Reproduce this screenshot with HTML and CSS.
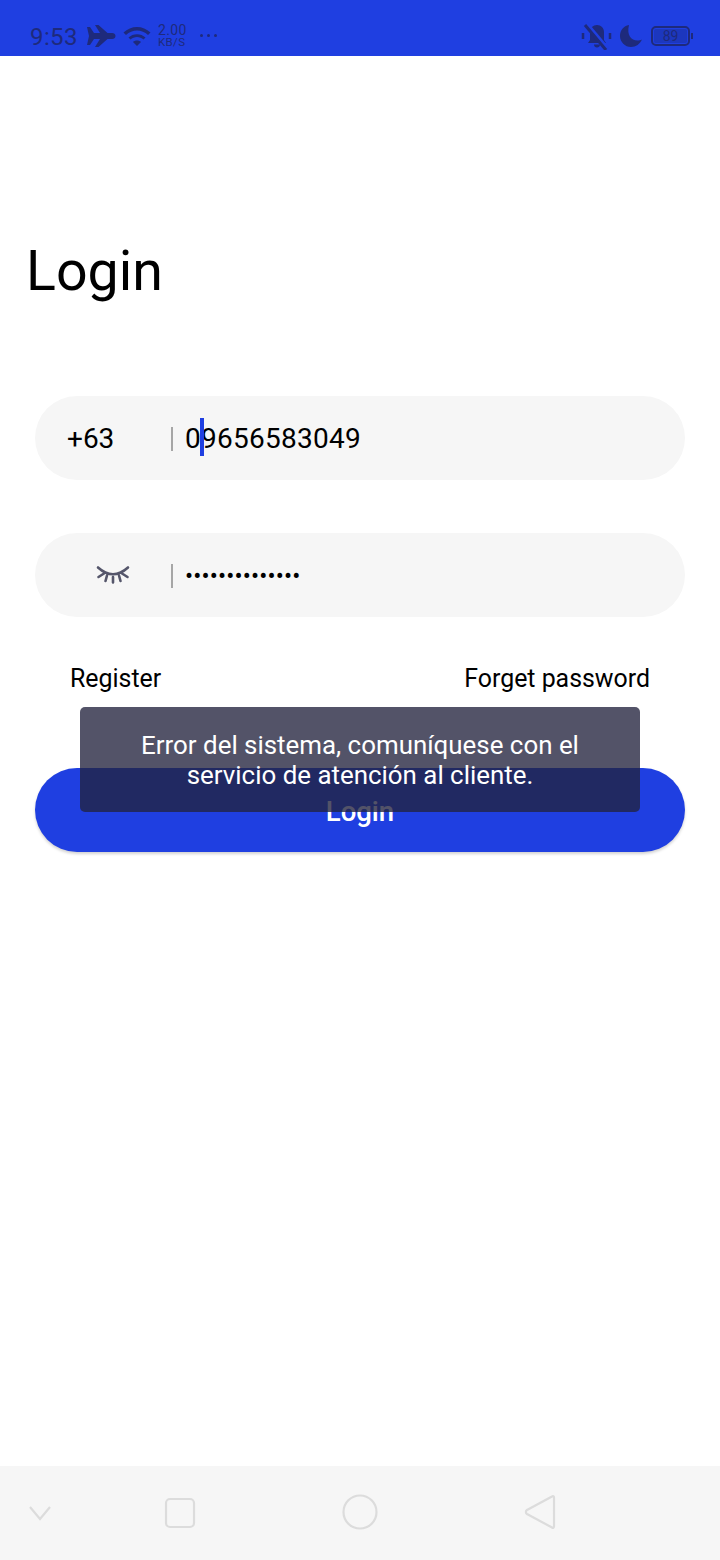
FILE: index.html
```html
<!DOCTYPE html>
<html lang="en">
<head>
<meta charset="utf-8">
<title>Login</title>
<link rel="stylesheet" href="styles.css">
</head>
<body>
<div class="screen">
  <header class="status">
    <div class="status-left">
      <span class="time">9:53</span>
      <svg class="ic-plane" width="30" height="24" viewBox="0 0 30 24"><path d="M1 3h3l4 6h6L9 1h3.500l9 8H26c2 0 3.500 1.300 3.500 3S28 15 26 15h-4.500l-9 8H9l5-8H8l-4 6H1l2-9z"/></svg>
      <svg class="ic-wifi" width="28" height="24" viewBox="0 0 28 24"><path d="M14 22l-4-4c2-2 6-2 8 0zM7.500 15.500l-2-2c4.500-4.500 12.500-4.500 17 0l-2 2c-3.500-3.500-9.500-3.500-13 0zM3 11L.5 8.500c7.500-7.500 19.500-7.500 27 0L25 11C19 5 9 5 3 11z"/></svg>
      <span class="speed"><span>2.00</span><span class="speed-unit">KB/S</span></span>
      <span class="dots">
        <i></i><i></i><i></i>
      </span>
    </div>
    <div class="status-right">
      <svg class="ic-bell" width="32" height="28" viewBox="0 0 32 28"><path d="M16 3c-4 0-7 3-7 7v8l-2 3h18l-2-3v-8c0-4-3-7-7-7zM13 22.500h6c0 2-1.300 3-3 3s-3-1-3-3z"/><path d="M5.500 1l21 25" class="slash-gap"/><path d="M4 3l21 25" class="slash"/><path d="M2 11v6M29 11v6" class="vib"/></svg>
      <svg class="ic-moon" width="24" height="24" viewBox="0 0 24 24"><path d="M10 1C4.500 2 1 6.500 1 12c0 6 5 11 11 11 5 0 9-3 11-7.500-1.500.8-3 1-4.500 1C12 16.500 7.500 11 10 1z"/></svg>
      <span class="battery"><span class="battery-level">89</span></span>
    </div>
  </header>

  <main class="content">
    <h1 class="title">Login</h1>

    <div class="field field-phone">
      <span class="field-lead">+63</span>
      <span class="sep"></span>
      <span class="value"><span class="digits">0</span><span class="caret"></span><span class="digits">9656583049</span></span>
    </div>

    <div class="field field-pass">
      <span class="field-lead field-lead-icon">
        <svg width="34" height="20" viewBox="0 0 34 20" fill="none"><path d="M2 3.500Q17 17 32 3.500M2.500 13L8 9.500M31.500 13L26 9.500M11 11.500L9.500 17M17 13v5.500M23 11.500L24.500 17" class="lash"/></svg>
      </span>
      <span class="sep"></span>
      <span class="value dots-text">••••••••••••••</span>
    </div>

    <div class="links">
      <a class="link">Register</a>
      <a class="link">Forget password</a>
    </div>

    <button class="login-btn">Login</button>

    <div class="toast">Error del sistema, comuníquese con el<br>servicio de atención al cliente.</div>
  </main>

  <nav class="navbar">
    <svg width="24" height="16" viewBox="0 0 24 16" class="nav-a"><path d="M2 2l10 12L22 2"/></svg>
    <svg width="32" height="32" viewBox="0 0 32 32" class="nav-b"><rect x="2" y="2" width="28" height="28" rx="4"/></svg>
    <svg width="36" height="36" viewBox="0 0 36 36" class="nav-c"><circle cx="18" cy="18" r="16.500"/></svg>
    <svg width="32" height="36" viewBox="0 0 32 36" class="nav-d"><path d="M28 2.500c1-.7 2-.2 2 1v29c0 1.200-1 1.700-2 1L3 20c-1.500-1-1.500-3 0-4z"/></svg>
  </nav>
</div>
</body>
</html>
```
FILE: styles.css
```css
* { box-sizing: border-box; }
html, body { margin: 0; padding: 0; }
body { background: #fff; font-family: Roboto, "Liberation Sans", sans-serif; color: #000; }
.screen { width: 720px; height: 1560px; display: flex; flex-direction: column; overflow: hidden; }

.status { height: 56px; flex: none; background: #1f3fe1; display: flex; justify-content: space-between; align-items: center; padding: 16px 30px 0; color: #1e2a7c; }
.status svg { fill: #1e2a7c; display: block; }
.status-left { display: flex; align-items: center; }
.time { font-size: 24px; line-height: 28px; letter-spacing: .4px; margin-top: 2px; }
.ic-plane { margin-left: 8px; }
.ic-wifi { margin-left: 7px; }
.speed { display: flex; flex-direction: column; margin-left: 7px; font-size: 14px; line-height: 12px; letter-spacing: .4px; }
.speed-unit { font-size: 11.500px; }
.dots { display: flex; gap: 4px; margin-left: 13px; margin-top: -2px; }
.dots i { width: 3px; height: 3px; border-radius: 50%; background: #1e2a7c; }
.status-right { display: flex; align-items: center; margin-right: 0; }
.status .slash-gap { stroke: #1f3fe1; stroke-width: 3; fill: none; }
.status .slash { stroke: #1e2a7c; stroke-width: 3; fill: none; }
.status .vib { stroke: #1e2a7c; stroke-width: 2.500; fill: none; }
.ic-moon { margin-left: 6px; }
.battery { margin-left: 8px; width: 39px; height: 20px; border: 2px solid #1e2a7c; border-radius: 5px; font-size: 14px; line-height: 16px; text-align: center; position: relative; }
.battery::after { content: ""; position: absolute; right: -5px; top: 5px; width: 2px; height: 6px; background: #1e2a7c; }
.battery-level { display: block; margin: 1px; background: #1c37be; border-radius: 2px; line-height: 14px; }

.content { flex: 1; position: relative; padding: 0 35px; min-height: 0; }
.title { margin: 181px 0 0 -9px; font-size: 55.500px; line-height: 70px; font-weight: 400; }
.field { height: 84px; border-radius: 42px; background: #f6f6f6; display: flex; align-items: center; }
.field-phone { margin-top: 89px; }
.field-pass { margin-top: 53px; }
.field-lead { width: 136px; padding-left: 32px; font-size: 28px; flex: none; }
.field-lead-icon { padding-left: 61px; }
.field-lead-icon svg { display: block; margin-top: -2px; }
.lash { stroke: #55566b; stroke-width: 2.600; stroke-linecap: round; }
.sep { width: 2px; height: 24px; background: #a6a6a6; flex: none; margin-top: 2px; }
.value { display: flex; align-items: center; margin-left: 12px; font-size: 28px; line-height: 38px; letter-spacing: .25px; }
.digits { padding-top: 2px; }
.caret { width: 4px; height: 38px; background: #1f3fe1; margin: -2px -3px 0 -1px; position: relative; }
.dots-text { font-size: 24px; letter-spacing: .15px; margin-top: 1px; }

.links { display: flex; justify-content: space-between; padding: 0 35px; margin-top: 47px; font-size: 24.900px; line-height: 30px; }
.login-btn { display: block; width: 100%; height: 84px; margin-top: 74px; border: 0; border-radius: 42px; background: #1f3fe1; color: #fff; font: 500 27.500px/84px Roboto, sans-serif; padding: 2px 0 0; box-shadow: 0 2px 3px rgba(0,0,0,.18); }

.toast { position: absolute; left: 80px; top: 651px; width: 560px; height: 105px; border-radius: 5px; background: rgba(35,35,62,.78); color: #fff; font-size: 25.900px; line-height: 30px; text-align: center; padding-top: 23px; }

.navbar { height: 94px; flex: none; background: #f6f6f6; display: flex; align-items: center; position: relative; padding-top: 0; }
.navbar svg { fill: none; stroke: #dcdcdc; stroke-width: 2.200; display: block; }
.nav-a { margin-left: 28px; margin-top: -1px; }
.nav-b { margin-left: 112px; margin-top: -1px; }
.nav-c { margin-left: 146px; margin-top: -2px; }
.nav-d { margin-left: 146px; margin-top: -2px; }
```
